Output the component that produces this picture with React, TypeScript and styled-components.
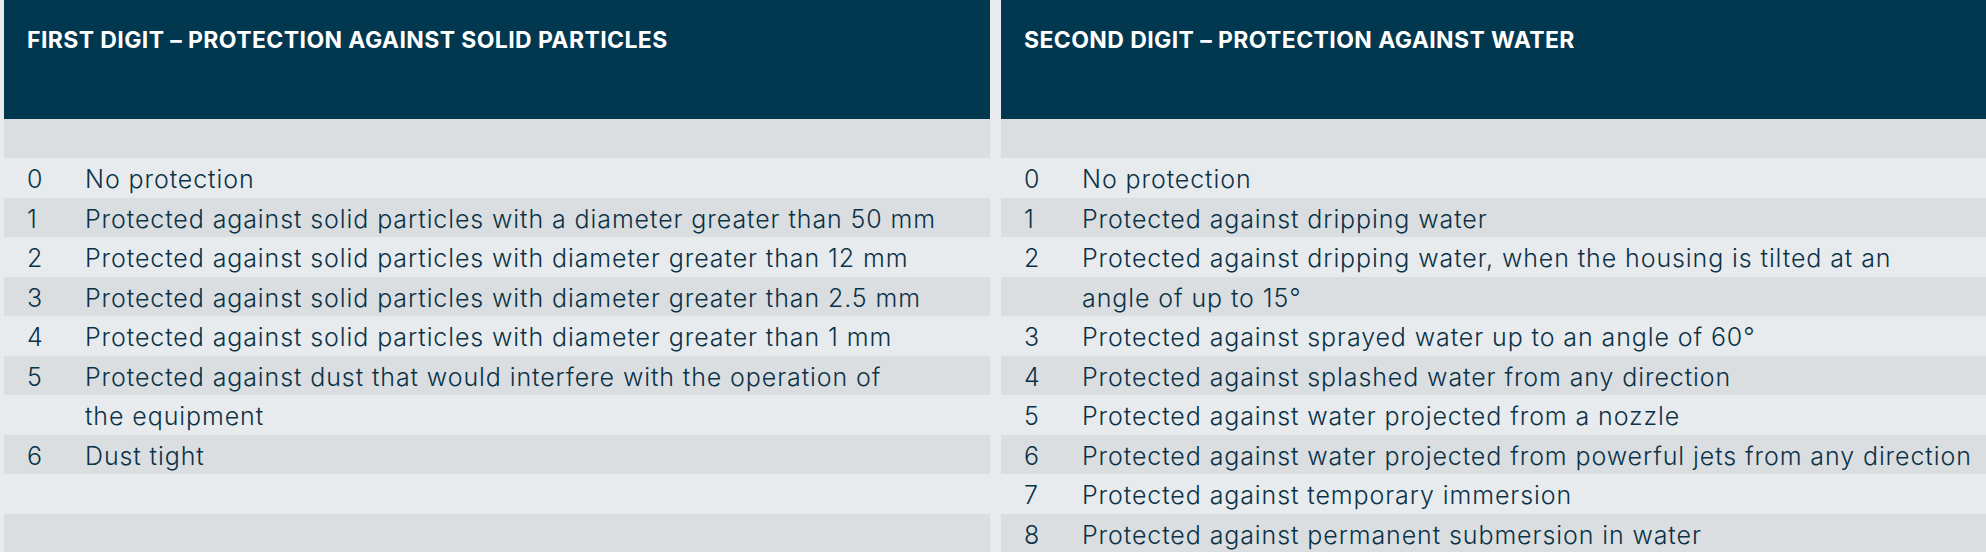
import styled, { createGlobalStyle } from "styled-components";

const GlobalStyle = createGlobalStyle`
  html,
  body {
    margin: 0;
    padding: 0;
    background: #e8ebee;
  }
`;

type Entry = {
  digit: string;
  lines: string[];
};

const solidEntries: Entry[] = [
  { digit: "0", lines: ["No protection"] },
  { digit: "1", lines: ["Protected against solid particles with a diameter greater than 50 mm"] },
  { digit: "2", lines: ["Protected against solid particles with diameter greater than 12 mm"] },
  { digit: "3", lines: ["Protected against solid particles with diameter greater than 2.5 mm"] },
  { digit: "4", lines: ["Protected against solid particles with diameter greater than 1 mm"] },
  {
    digit: "5",
    lines: ["Protected against dust that would interfere with the operation of", "the equipment"],
  },
  { digit: "6", lines: ["Dust tight"] },
];

const waterEntries: Entry[] = [
  { digit: "0", lines: ["No protection"] },
  { digit: "1", lines: ["Protected against dripping water"] },
  {
    digit: "2",
    lines: ["Protected against dripping water, when the housing is tilted at an", "angle of up to 15°"],
  },
  { digit: "3", lines: ["Protected against sprayed water up to an angle of 60°"] },
  { digit: "4", lines: ["Protected against splashed water from any direction"] },
  { digit: "5", lines: ["Protected against water projected from a nozzle"] },
  { digit: "6", lines: ["Protected against water projected from powerful jets from any direction"] },
  { digit: "7", lines: ["Protected against temporary immersion"] },
  { digit: "8", lines: ["Protected against permanent submersion in water"] },
];

const Page = styled.div`
  height: 552px;
  overflow: hidden;
  padding-left: 4px;
  display: grid;
  grid-template-columns: 986px 985px;
  column-gap: 11px;
  background: #e8ebee;
`;

const Panel = styled.section`
  display: flex;
  flex-direction: column;
  min-height: 0;
`;

const PanelHeader = styled.header`
  height: 119px;
  flex-shrink: 0;
  box-sizing: border-box;
  padding: 29px 23px 0;
  background: #01374f;
`;

const PanelTitle = styled.h2`
  margin: 0;
  font-family: Inter, "Liberation Sans", sans-serif;
  font-weight: 700;
  font-size: 23px;
  line-height: 23px;
  letter-spacing: 0.4px;
  color: #ffffff;
  text-transform: uppercase;
`;

// every text line sits on its own stripe, grey then light, starting with an empty grey line
const PanelBody = styled.div`
  flex: 1;
  padding-top: 41px;
  background: repeating-linear-gradient(
    to bottom,
    #dadee1 0,
    #dadee1 39.5px,
    transparent 39.5px,
    transparent 79px
  );
`;

const EntryRow = styled.div`
  display: grid;
  grid-template-columns: 58px 1fr;
  padding-left: 23px;
  font-family: Inter, "Liberation Sans", sans-serif;
  font-weight: 300;
  font-size: 25px;
  line-height: 39.5px;
  letter-spacing: 0.9px;
  color: #0b3247;
`;

const Digit = styled.span`
  display: block;
`;

const Description = styled.span`
  display: block;
  white-space: nowrap;
`;

function IpPanel({ title, entries }: { title: string; entries: Entry[] }) {
  return (
    <Panel>
      <PanelHeader>
        <PanelTitle>{title}</PanelTitle>
      </PanelHeader>
      <PanelBody>
        {entries.map((entry) => (
          <EntryRow key={entry.digit}>
            <Digit>{entry.digit}</Digit>
            <Description>
              {entry.lines.map((line, i) => (
                <span key={i}>
                  {i > 0 && <br />}
                  {line}
                </span>
              ))}
            </Description>
          </EntryRow>
        ))}
      </PanelBody>
    </Panel>
  );
}

export default function App() {
  return (
    <>
      <GlobalStyle />
      <Page>
        <IpPanel title="First digit – protection against solid particles" entries={solidEntries} />
        <IpPanel title="Second digit – protection against water" entries={waterEntries} />
      </Page>
    </>
  );
}
